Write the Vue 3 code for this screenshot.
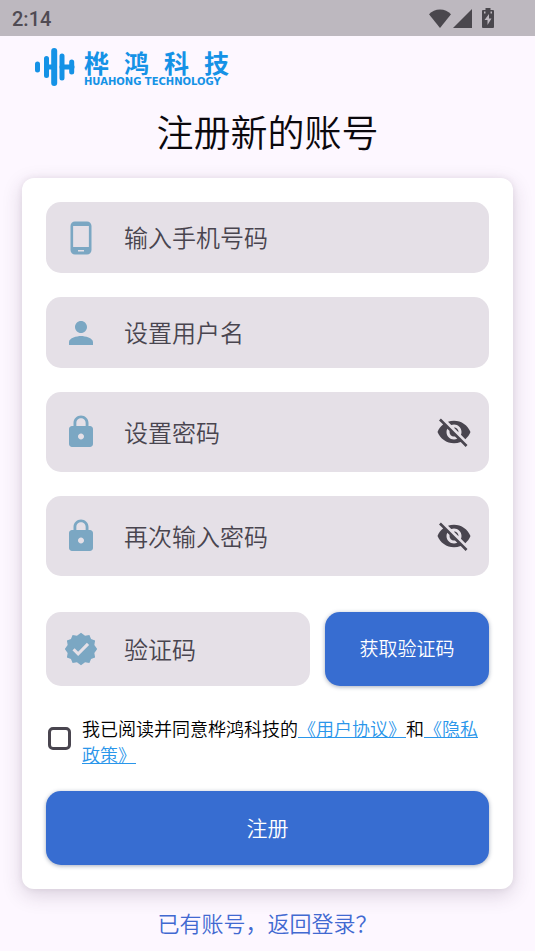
<script setup>
import { ref } from 'vue'

const icons = {
  phone: 'M16 1H8C6.34 1 5 2.34 5 4v16c0 1.66 1.34 3 3 3h8c1.66 0 3-1.34 3-3V4c0-1.66-1.34-3-3-3zm-2 20h-4v-1h4v1zm3.25-3H6.75V4h10.5v14z',
  person: 'M12 12c2.21 0 4-1.79 4-4s-1.79-4-4-4-4 1.79-4 4 1.79 4 4 4zm0 2c-2.67 0-8 1.34-8 4v2h16v-2c0-2.66-5.33-4-8-4z',
  lock: 'M18 8h-1V6c0-2.76-2.24-5-5-5S7 3.24 7 6v2H6c-1.1 0-2 .9-2 2v10c0 1.1.9 2 2 2h12c1.1 0 2-.9 2-2V10c0-1.1-.9-2-2-2zm-6 9c-1.1 0-2-.9-2-2s.9-2 2-2 2 .9 2 2-.9 2-2 2zm3.1-9H8.9V6c0-1.71 1.39-3.1 3.1-3.1 1.71 0 3.1 1.39 3.1 3.1v2z',
  badge: 'M12 1.2L14.700 3.100 17.600 2.600 18.700 5.300 21.400 6.400 20.900 9.300 22.800 12 20.900 14.700 21.400 17.600 18.700 18.700 17.600 21.400 14.700 20.900 12 22.800 9.300 20.900 6.400 21.400 5.300 18.700 2.600 17.600 3.100 14.700 1.200 12 3.100 9.300 2.600 6.400 5.300 5.300 6.400 2.600 9.300 3.100zM10.090 16.720l7.330-7.350-1.480-1.480-5.850 5.870-2.320-2.330-1.480 1.480z',
  eyeOff: 'M12 7c2.76 0 5 2.24 5 5 0 .65-.13 1.26-.36 1.83l2.92 2.92c1.51-1.26 2.7-2.89 3.43-4.75-1.73-4.39-6-7.5-11-7.5-1.4 0-2.74.25-3.98.7l2.16 2.16C10.74 7.13 11.35 7 12 7zM2 4.27l2.28 2.28.46.46C3.08 8.3 1.78 10.02 1 12c1.73 4.39 6 7.5 11 7.5 1.55 0 3.03-.3 4.38-.84l.42.42L19.73 22 21 20.73 3.27 3 2 4.27zM7.53 9.8l1.55 1.55c-.05.21-.08.43-.08.65 0 1.66 1.34 3 3 3 .22 0 .44-.03.65-.08l1.55 1.55c-.67.33-1.41.53-2.2.53-2.76 0-5-2.24-5-5 0-.79.2-1.53.53-2.2zm4.31-.78l3.15 3.15.02-.16c0-1.66-1.34-3-3-3l-.17.01z',
}

const fields = [
  { id: 'phone', label: '输入手机号码', icon: icons.phone, type: 'tel' },
  { id: 'username', label: '设置用户名', icon: icons.person, type: 'text' },
  { id: 'password', label: '设置密码', icon: icons.lock, type: 'password' },
  { id: 'confirm', label: '再次输入密码', icon: icons.lock, type: 'password' },
]

const form = ref({ phone: '', username: '', password: '', confirm: '', code: '' })
const shown = ref({ password: false, confirm: false })
const agreed = ref(false)
</script>

<template>
  <div class="screen" lang="zh-CN">
    <header class="status">
      <span class="time">2:14</span>
      <div class="signals">
        <svg class="wifi" viewBox="0 0 22 19" aria-hidden="true"><path d="M11 19 0 5.200C3 2.200 6.500.500 11 .500S19 2.200 22 5.200z" /></svg>
        <svg class="cell" viewBox="0 0 19 19" aria-hidden="true"><path d="M19 0v19H0z" /></svg>
        <svg class="battery" viewBox="0 0 12 20" aria-hidden="true"><path fill-rule="evenodd" d="M3.500 0h5v2H11q1 0 1 1v16q0 1-1 1H1q-1 0-1-1V3q0-1 1-1h2.500zM7 6l-4.500 6H5.500v5L9.500 10.500H7zM2 3.500v2h1.500v-2zM8.500 3.500v2H10v-2z" /></svg>
      </div>
    </header>

    <div class="brand">
      <svg class="mark" viewBox="0 0 40 38" aria-hidden="true">
        <g fill="none" stroke-linecap="round">
          <path d="M2.500 16v6M36.700 14v10" stroke-width="5" />
          <path d="M11.500 10.500v17M27 8v22" stroke-width="5" />
          <path d="M19.200 3v32" stroke-width="6" />
          <path d="M11.500 19h8M27 19h10" stroke-width="5" />
        </g>
      </svg>
      <div class="wordmark">
        <div class="name"><span>桦</span><span>鸿</span><span>科</span><span>技</span></div>
        <div class="latin">HUAHONG TECHNOLOGY</div>
      </div>
    </div>

    <h1>注册新的账号</h1>

    <form class="card" @submit.prevent>
      <div v-for="f in fields" :key="f.id" class="field" :class="{ tall: f.type === 'password' }">
        <svg class="lead" viewBox="0 0 24 24" aria-hidden="true"><path :d="f.icon" /></svg>
        <input
          :id="f.id"
          v-model="form[f.id]"
          :type="f.type === 'password' && shown[f.id] ? 'text' : f.type"
          :placeholder="f.label"
          :aria-label="f.label"
        />
        <button
          v-if="f.type === 'password'"
          type="button"
          class="eye"
          aria-label="显示密码"
          @click="shown[f.id] = !shown[f.id]"
        >
          <svg viewBox="0 0 24 24" aria-hidden="true"><path :d="icons.eyeOff" /></svg>
        </button>
      </div>

      <div class="verify">
        <div class="field">
          <svg class="lead" viewBox="0 0 24 24" aria-hidden="true"><path fill-rule="evenodd" :d="icons.badge" /></svg>
          <input id="code" v-model="form.code" type="text" placeholder="验证码" aria-label="验证码" />
        </div>
        <button type="button" class="primary send">获取验证码</button>
      </div>

      <div class="terms">
        <input id="agree" v-model="agreed" type="checkbox" />
        <p>
          <label for="agree">我已阅读并同意桦鸿科技的</label><a href="#terms">《用户协议》</a>和<a href="#privacy">《隐私政策》</a>
        </p>
      </div>

      <button type="submit" class="primary submit">注册</button>
    </form>

    <a class="login" href="#login">已有账号，返回登录？</a>
  </div>
</template>

<style>
body {
  background: #fdf7ff;
}
</style>

<style scoped>
.screen {
  display: flex;
  flex-direction: column;
  min-height: 100vh;
  overflow: hidden;
  background: #fdf7ff;
  font-family: 'Noto Sans CJK SC', sans-serif;
  font-weight: 350;
}

.screen *,
.screen {
  box-sizing: border-box;
}

.status {
  display: flex;
  align-items: center;
  justify-content: space-between;
  height: 36px;
  padding: 0 41px 0 12px;
  background: #bdb8bf;
  color: #504b53;
}

.time {
  padding-top: 2px;
  font: 500 20px/34px Roboto, sans-serif;
}

.signals {
  display: flex;
  align-items: center;
  fill: #4a474d;
}

.wifi {
  width: 22px;
  height: 19px;
}

.cell {
  width: 19px;
  height: 19px;
  margin-left: 2px;
}

.battery {
  width: 12px;
  height: 20px;
  margin-left: 10px;
}

.brand {
  display: flex;
  align-items: center;
  gap: 9px;
  height: 62px;
  padding-left: 35px;
  color: #1592e6;
}

.mark {
  width: 40px;
  height: 38px;
  stroke: currentColor;
}

.wordmark {
  width: 145px;
  padding-top: 2px;
}

.name {
  display: flex;
  justify-content: space-between;
  font-size: 25px;
  line-height: 28px;
  font-weight: 700;
}

.latin {
  font: 700 10px/12px 'DejaVu Sans', sans-serif;
  white-space: nowrap;
}

h1 {
  margin: 5px 0 19px;
  text-align: center;
  color: #0b080d;
  font-size: 37px;
  line-height: 56px;
  font-weight: 350;
}

.card {
  display: flex;
  flex-direction: column;
  gap: 24px;
  margin: 0 22px;
  padding: 24px;
  border-radius: 12px;
  background: #fff;
  box-shadow: 0 6px 20px rgba(60, 40, 70, 0.18), 0 0 6px rgba(60, 40, 70, 0.08);
}

.field {
  display: flex;
  align-items: center;
  height: 71px;
  padding: 0 17px;
  border-radius: 15px;
  background: #e5e0e7;
}

.field.tall {
  height: 80px;
}

.lead {
  flex: none;
  width: 36px;
  height: 36px;
  fill: #7ba7c3;
}

.field input {
  flex: 1;
  min-width: 0;
  height: 100%;
  margin-left: 25px;
  padding: 0 0 2px;
  border: 0;
  outline: 0;
  background: none;
  color: #49454f;
  font: inherit;
  font-size: 24px;
}

.field input::placeholder {
  color: #49454f;
  opacity: 1;
}

.eye {
  display: flex;
  padding: 0;
  border: 0;
  background: none;
}

.eye svg {
  width: 36px;
  height: 36px;
  fill: #49454f;
}

.verify {
  display: flex;
  gap: 15px;
  margin-top: 12px;
}

.verify .field {
  flex: 1;
  min-width: 0;
  height: 74px;
}

.primary {
  height: 74px;
  padding: 0 0 3px;
  border: 0;
  border-radius: 15px;
  background: #376dd1;
  color: #fff;
  font: inherit;
  box-shadow: 0 1px 4px rgba(30, 50, 90, 0.4);
}

.send {
  width: 164px;
  font-size: 19px;
}

.submit {
  font-size: 21px;
}

.terms {
  display: flex;
  align-items: flex-start;
  gap: 11px;
  padding: 5px 0 0 2px;
}

.terms input {
  flex: none;
  appearance: none;
  width: 23px;
  height: 23px;
  margin: 12px 0 0;
  border: 3px solid #49454f;
  border-radius: 5px;
}

.terms input:checked {
  background: #376dd1;
}

.terms p {
  margin: 0;
  color: #000;
  font-size: 18px;
  line-height: 26px;
}

.terms a {
  color: #2a96ea;
}

.login {
  align-self: center;
  margin-top: 17px;
  color: #4169d1;
  font-size: 22px;
  line-height: 32px;
  text-decoration: none;
}
</style>
